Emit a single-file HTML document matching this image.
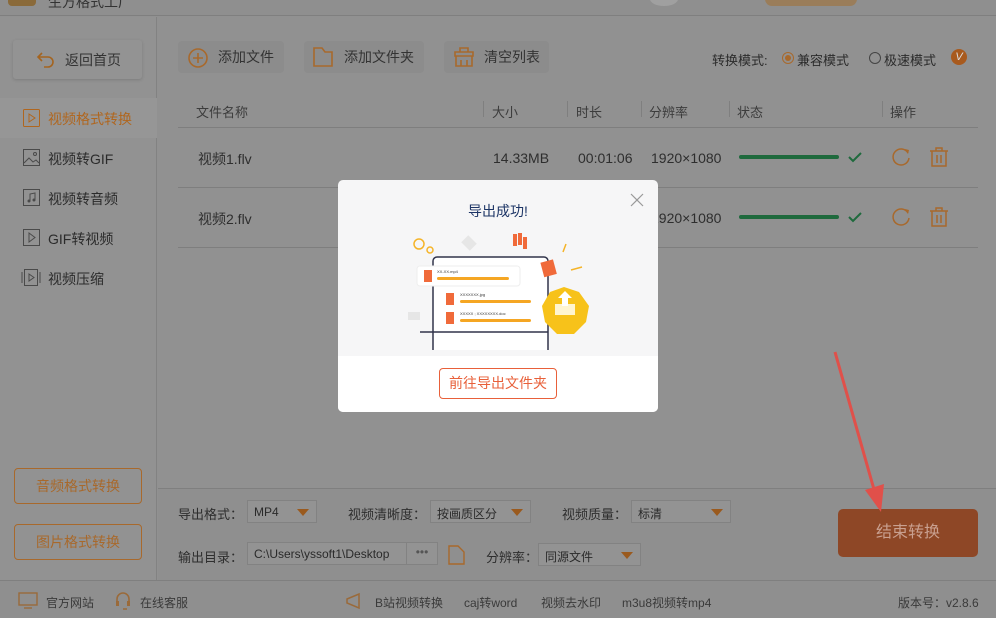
<!DOCTYPE html>
<html><head><meta charset="utf-8"><style>
*{margin:0;padding:0;box-sizing:border-box}
body{width:996px;height:618px;overflow:hidden;background:#919191;font-family:"Liberation Sans","Noto Sans CJK SC",sans-serif;font-size:13px;color:#2b2b2b;position:relative}
.a{position:absolute}
.btn{position:absolute;height:32px;top:41px;background:#8c8c8c;border-radius:4px;font-size:14px;display:flex;align-items:center;padding-left:40px;color:#333}
.hd{position:absolute;top:102px;font-size:13px;color:#3c3c3c}
.sep{position:absolute;width:1px;height:16px;background:#7f7f7f;top:101px}
.row{position:absolute;font-size:14px;color:#2e2e2e}
.line{position:absolute;height:1px;background:#7e7e7e;left:178px;width:800px}
.bar{position:absolute;left:739px;width:100px;height:4px;border-radius:2px;background:#1f6a3d}
.sel{position:absolute;height:23px;border:1px solid #828282;background:#939393;font-size:12px;padding:4px 6px;color:#2a2a2a}
.tri{position:absolute;right:7px;top:8px;width:0;height:0;border-left:6px solid transparent;border-right:6px solid transparent;border-top:7px solid #9a5a1e}
.lb{position:absolute;font-size:13px;color:#2e2e2e}
.ft{position:absolute;top:594px;font-size:12px;color:#3a3a3a}
</style></head><body>
<div class="a" style="left:0;top:0;width:996px;height:16px;background:#8f8f8f;border-bottom:1px solid #7f7f7f"></div>
<div class="a" style="left:8px;top:-8px;width:28px;height:14px;border-radius:4px;background:#8a6a3a"></div>
<div class="a" style="left:48px;top:-8px;font-size:14px;color:#333">生方格式工厂</div>
<div class="a" style="left:650px;top:-8px;width:28px;height:14px;border-radius:50%;background:#a0a0a0"></div>
<div class="a" style="left:765px;top:-8px;width:92px;height:14px;border-radius:7px;background:#9a7d5a"></div>
<div class="a" style="left:0;top:17px;width:157px;height:563px;background:#929292;border-right:1px solid #828282"></div>
<div class="a" style="left:13px;top:40px;width:129px;height:39px;background:#939393;border-radius:3px;box-shadow:0 1px 3px rgba(0,0,0,.15);display:flex;align-items:center;padding-left:22px;font-size:14px;color:#333"><svg width="22" height="20" viewBox="0 0 22 20" style="margin-right:8px"><path d="M7 3L3 7l4 4M3 7h10a5 5 0 010 10H9" fill="none" stroke="#a4641f" stroke-width="1.6"/></svg>返回首页</div>
<div class="a" style="left:0;top:98px;width:157px;height:40px;background:#969696"></div>
<div class="a" style="left:48px;top:109px;font-size:14px;color:#b0661e">视频格式转换</div>
<svg class="a" style="left:23px;top:109px" width="17" height="18"><rect x="0.5" y="0.5" width="16" height="17" rx="1" fill="none" stroke="#b0661e"/><path d="M6 5l6 4-6 4z" fill="none" stroke="#b0661e"/></svg>
<div class="a" style="left:48px;top:149px;font-size:14px">视频转GIF</div>
<svg class="a" style="left:23px;top:149px" width="17" height="17"><rect x="0.5" y="0.5" width="16" height="16" fill="none" stroke="#4a4a4a"/><path d="M1 14l5-5 4 4 3-2 3 3" fill="none" stroke="#4a4a4a"/><circle cx="12" cy="5" r="1.5" fill="none" stroke="#4a4a4a"/></svg>
<div class="a" style="left:48px;top:189px;font-size:14px">视频转音频</div>
<svg class="a" style="left:23px;top:189px" width="17" height="17"><rect x="0.5" y="0.5" width="16" height="16" fill="none" stroke="#4a4a4a"/><path d="M7 12V5l5-1v7" fill="none" stroke="#4a4a4a"/><circle cx="6" cy="12" r="1.5" fill="#4a4a4a"/><circle cx="11" cy="11" r="1.5" fill="#4a4a4a"/></svg>
<div class="a" style="left:48px;top:229px;font-size:14px">GIF转视频</div>
<svg class="a" style="left:23px;top:229px" width="17" height="17"><rect x="0.5" y="0.5" width="16" height="16" fill="none" stroke="#4a4a4a"/><path d="M6 4l6 4.5-6 4.5z" fill="none" stroke="#4a4a4a"/></svg>
<div class="a" style="left:48px;top:269px;font-size:14px">视频压缩</div>
<svg class="a" style="left:21px;top:269px" width="20" height="17"><rect x="3.5" y="0.5" width="13" height="16" fill="none" stroke="#4a4a4a"/><path d="M8 5l5 3.5-5 3.5zM1 3v11M19 3v11" fill="none" stroke="#4a4a4a"/></svg>
<div class="a" style="left:14px;top:468px;width:128px;height:36px;border:1px solid #a8692c;border-radius:4px;font-size:14px;color:#a8692c;text-align:center;line-height:34px">音频格式转换</div>
<div class="a" style="left:14px;top:524px;width:128px;height:36px;border:1px solid #a8692c;border-radius:4px;font-size:14px;color:#a8692c;text-align:center;line-height:34px">图片格式转换</div>
<div class="btn" style="left:178px;width:106px">添加文件</div>
<svg class="a" style="left:187px;top:47px" width="22" height="22"><circle cx="11" cy="11" r="9" fill="none" stroke="#a8692c" stroke-width="1.6"/><path d="M11 6v10M6 11h10" stroke="#a8692c" stroke-width="1.6"/></svg>
<div class="btn" style="left:304px;width:120px">添加文件夹</div>
<svg class="a" style="left:312px;top:46px" width="22" height="22"><path d="M2 2h8l3 4h7v14H2z" fill="none" stroke="#a8692c" stroke-width="1.6"/></svg>
<div class="btn" style="left:444px;width:105px">清空列表</div>
<svg class="a" style="left:452px;top:46px" width="24" height="22"><path d="M8 6V2h8v4M3 6h18v4H3zM4 10h16v10H4zM9 14v6M15 14v6" fill="none" stroke="#a8692c" stroke-width="1.6"/></svg>
<div class="a" style="left:712px;top:50px;font-size:13px">转换模式:</div>
<div class="a" style="left:782px;top:52px;width:12px;height:12px;border:1px solid #a8692c;border-radius:50%"><div style="margin:2px;width:6px;height:6px;border-radius:50%;background:#a8692c"></div></div>
<div class="a" style="left:797px;top:50px;font-size:13px">兼容模式</div>
<div class="a" style="left:869px;top:52px;width:12px;height:12px;border:1px solid #444;border-radius:50%"></div>
<div class="a" style="left:884px;top:50px;font-size:13px">极速模式</div>
<div class="a" style="left:951px;top:49px;width:16px;height:16px;border-radius:50%;background:#a85a1e;color:#ddd;font-size:11px;font-style:italic;text-align:center;line-height:16px">V</div>
<div class="hd" style="left:196px">文件名称</div>
<div class="sep" style="left:483px"></div><div class="hd" style="left:492px">大小</div>
<div class="sep" style="left:567px"></div><div class="hd" style="left:576px">时长</div>
<div class="sep" style="left:641px"></div><div class="hd" style="left:649px">分辨率</div>
<div class="sep" style="left:729px"></div><div class="hd" style="left:737px">状态</div>
<div class="sep" style="left:882px"></div><div class="hd" style="left:890px">操作</div>
<div class="line" style="top:127px"></div>
<div class="line" style="top:187px"></div>
<div class="line" style="top:247px"></div>
<div class="row" style="left:198px;top:149px">视频1.flv</div>
<div class="row" style="left:493px;top:150px">14.33MB</div>
<div class="row" style="left:578px;top:150px">00:01:06</div>
<div class="row" style="left:651px;top:150px">1920×1080</div>
<div class="bar" style="top:155px"></div>
<div class="row" style="left:198px;top:209px">视频2.flv</div>
<div class="row" style="left:651px;top:210px">1920×1080</div>
<div class="bar" style="top:215px"></div>
<svg class="a" style="left:848px;top:151px" width="14" height="12"><path d="M1 6l4 4 8-8" fill="none" stroke="#1f6a3d" stroke-width="2"/></svg>
<svg class="a" style="left:848px;top:211px" width="14" height="12"><path d="M1 6l4 4 8-8" fill="none" stroke="#1f6a3d" stroke-width="2"/></svg>
<svg class="a" style="left:890px;top:146px" width="22" height="22"><path d="M18 7A8 8 0 1 0 19 12" fill="none" stroke="#a8692c" stroke-width="1.5"/><path d="M15 3l4 1-1 4z" fill="#a8692c"/></svg>
<svg class="a" style="left:890px;top:206px" width="22" height="22"><path d="M18 7A8 8 0 1 0 19 12" fill="none" stroke="#a8692c" stroke-width="1.5"/><path d="M15 3l4 1-1 4z" fill="#a8692c"/></svg>
<svg class="a" style="left:929px;top:147px" width="20" height="20"><path d="M1 4h18M7 4V1h6v3M3 4v15h14V4M8 8v8M12 8v8" fill="none" stroke="#a8692c" stroke-width="1.5"/></svg>
<svg class="a" style="left:929px;top:207px" width="20" height="20"><path d="M1 4h18M7 4V1h6v3M3 4v15h14V4M8 8v8M12 8v8" fill="none" stroke="#a8692c" stroke-width="1.5"/></svg>
<div class="a" style="left:158px;top:488px;width:838px;height:92px;background:#8f8f8f;border-top:1px solid #7f7f7f"></div>
<div class="lb" style="left:178px;top:504px">导出格式：</div>
<div class="sel" style="left:247px;top:500px;width:70px">MP4<div class="tri"></div></div>
<div class="lb" style="left:348px;top:504px">视频清晰度：</div>
<div class="sel" style="left:430px;top:500px;width:101px">按画质区分<div class="tri"></div></div>
<div class="lb" style="left:562px;top:504px">视频质量：</div>
<div class="sel" style="left:631px;top:500px;width:100px">标清<div class="tri"></div></div>
<div class="lb" style="left:178px;top:547px">输出目录：</div>
<div class="sel" style="left:247px;top:542px;width:191px;overflow:hidden;white-space:nowrap">C:\Users\yssoft1\Desktop</div>
<div class="a" style="left:406px;top:542px;width:32px;height:23px;background:#939393;border:1px solid #828282;color:#555;text-align:center;font-size:12px;line-height:18px">•••</div>
<svg class="a" style="left:447px;top:544px" width="20" height="22"><path d="M2 2h9l6 6v12H2z" fill="none" stroke="#a8692c" stroke-width="1.4"/></svg>
<div class="lb" style="left:486px;top:547px">分辨率：</div>
<div class="sel" style="left:538px;top:543px;width:103px">同源文件<div class="tri"></div></div>
<div class="a" style="left:838px;top:509px;width:140px;height:48px;border-radius:5px;background:#8e4726;color:#c9a090;font-size:16px;text-align:center;line-height:48px">结束转换</div>
<svg class="a" style="left:825px;top:350px" width="70" height="170"><path d="M10 2L52 150" stroke="#e0504a" stroke-width="3"/><path d="M40 140l16 22 3-28z" fill="#e0504a"/></svg>
<div class="a" style="left:0;top:580px;width:996px;height:38px;background:#8f8f8f;border-top:1px solid #7f7f7f"></div>
<svg class="a" style="left:18px;top:592px" width="20" height="18"><rect x="1" y="1" width="18" height="12" fill="none" stroke="#9a6a3a" stroke-width="1.4"/><path d="M6 16h8" stroke="#9a6a3a" stroke-width="1.4"/></svg>
<div class="ft" style="left:46px">官方网站</div>
<svg class="a" style="left:114px;top:591px" width="18" height="20"><path d="M3 11V8a6 6 0 0112 0v3M9 18h4" fill="none" stroke="#9a6a3a" stroke-width="1.6"/><rect x="2" y="10" width="3" height="5" fill="#9a6a3a"/><rect x="13" y="10" width="3" height="5" fill="#9a6a3a"/></svg>
<div class="ft" style="left:140px">在线客服</div>
<svg class="a" style="left:344px;top:590px" width="24" height="22"><path d="M3 9l12-5v14L3 13z" fill="none" stroke="#9a6a3a" stroke-width="1.5"/></svg>
<div class="ft" style="left:375px">B站视频转换</div>
<div class="ft" style="left:464px">caj转word</div>
<div class="ft" style="left:541px">视频去水印</div>
<div class="ft" style="left:622px">m3u8视频转mp4</div>
<div class="ft" style="left:898px">版本号：v2.8.6</div>
<div class="a" style="left:338px;top:180px;width:320px;height:232px;background:#f6f6f7;border-radius:5px;overflow:hidden">
 <div class="a" style="left:0;top:176px;width:320px;height:56px;background:#fff"></div>
 <div class="a" style="left:0;top:21px;width:320px;text-align:center;font-size:14px;color:#1d3566">导出成功!</div>
 <svg class="a" style="left:292px;top:13px" width="14" height="14"><path d="M1 1l12 12M13 1L1 13" stroke="#999" stroke-width="1.2"/></svg>
 <div class="a" style="left:101px;top:188px;width:118px;height:31px;border:1px solid #e8603a;border-radius:4px;color:#e8603a;font-size:14px;text-align:center;line-height:29px">前往导出文件夹</div>
 <svg class="a" style="left:0;top:40px" width="320" height="130">
  <circle cx="81" cy="24" r="5" fill="none" stroke="#f5b428" stroke-width="1.5"/>
  <circle cx="92" cy="30" r="3" fill="none" stroke="#f5b428" stroke-width="1.5"/>
  <rect x="125" y="18" width="12" height="10" fill="#e6e6e6" transform="rotate(45 131 23)"/>
  <rect x="175" y="14" width="4" height="12" fill="#f06a3a"/><rect x="180" y="13" width="4" height="12" fill="#f06a3a"/><rect x="185" y="17" width="4" height="12" fill="#f06a3a"/>
  <path d="M228 24l-3 8M233 50l11-3" stroke="#f5b428" stroke-width="1.5"/>
  <rect x="95" y="37" width="115" height="113" rx="4" fill="#fff" stroke="#30334a" stroke-width="1.5"/>
  <path d="M82 112h128" stroke="#30334a" stroke-width="1.5"/>
  <rect x="79" y="46" width="103" height="20" rx="3" fill="#fff" stroke="#eee"/>
  <rect x="86" y="50" width="8" height="12" fill="#f06a3a"/>
  <rect x="99" y="57" width="72" height="3" rx="1.5" fill="#f5a623"/>
  <text x="99" y="53" font-size="4" fill="#333">XX-XX.mp4</text>
  <rect x="108" y="73" width="8" height="12" fill="#f06a3a"/>
  <rect x="122" y="80" width="71" height="3" rx="1.5" fill="#f5a623"/>
  <text x="122" y="76" font-size="4" fill="#333">XXXXXXX.jpg</text>
  <rect x="108" y="92" width="8" height="12" fill="#f06a3a"/>
  <rect x="122" y="99" width="71" height="3" rx="1.5" fill="#f5a623"/>
  <text x="122" y="95" font-size="4" fill="#333">XXXXX ; XXXXXXXX.doc</text>
  <rect x="204" y="41" width="13" height="15" fill="#f06a3a" transform="rotate(-15 210 48)"/>
  <polygon points="226,67 241,72 251,86 248,102 236,114 219,114 207,102 204,86 212,72" fill="#f7c21a"/>
  <rect x="217" y="84" width="20" height="11" fill="#fff5d0"/>
  <path d="M227 71l-7 7h4v8h6v-8h4z" fill="#fff"/>
  <rect x="70" y="92" width="12" height="8" fill="#e6e6e6"/>
 </svg>
</div>
</body></html>
